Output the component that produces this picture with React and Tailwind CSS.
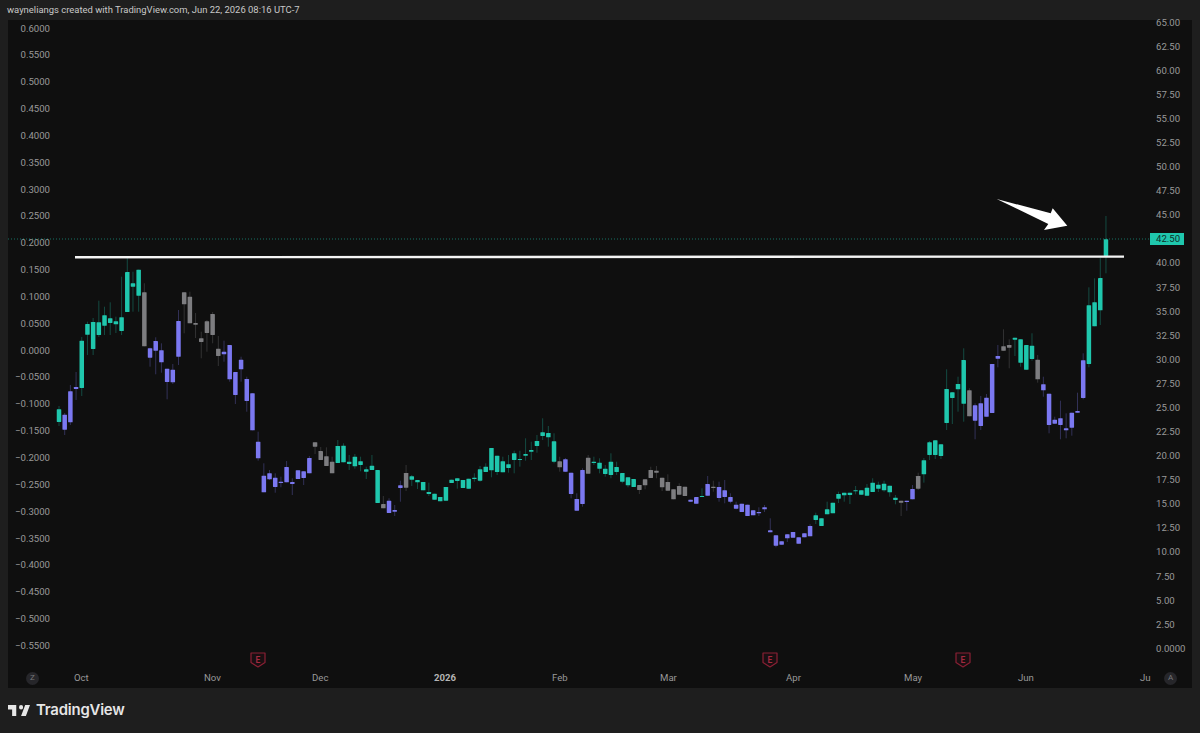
import React from 'react';

const T = '#1fc7ad';
const P = '#7b78f1';
const G = '#7d7d80';

// body top, body bottom, wick top, wick bottom, colour - one row per trading day
const candles = [
  [409.3, 422, 406, 426, T], [414.7, 429.7, 413, 435, P], [391.3, 422.3, 385, 425, P], [387, 389, 372, 400, P],
  [340.7, 388, 337, 396, T], [324, 334.7, 321.7, 355, T], [322, 349, 318, 355, T], [322.3, 335, 300.7, 337, T],
  [315.3, 325.7, 306.7, 335, T], [318.3, 323, 302.3, 335, T], [321.3, 324.3, 316.7, 333, T], [317.3, 331, 276.7, 335, T],
  [272, 312, 258, 312, T], [283.3, 286.7, 271.7, 311.7, T], [269.7, 295.7, 269.7, 311.7, T], [292.3, 346.3, 283.3, 346.3, G],
  [348.3, 357.7, 347.7, 366.7, P], [341, 350.7, 337.3, 374.3, P], [350.3, 362.3, 343.3, 372.7, P], [368.7, 382, 368.7, 399.3, P],
  [369.7, 382.3, 364, 384, P], [321, 356.7, 310, 365, P], [292.3, 304.3, 292.3, 333.3, G], [296.7, 323.3, 291.7, 323.3, G],
  [323, 324.7, 313, 338, G], [338.3, 342, 331.7, 358.3, G], [321.3, 333, 320, 351.7, G], [314, 335, 312, 343.3, G],
  [348.7, 356, 336, 366, G], [351.7, 354.3, 340.7, 361.7, P], [345, 379.3, 345, 381.7, P], [372, 395, 372, 404, P],
  [359.7, 369.3, 356.7, 381.7, P], [379, 401, 376.7, 411.7, P], [393.3, 430.3, 393.3, 430.3, P], [441.7, 458.3, 431.7, 460.7, P],
  [475.7, 492.3, 463.3, 492.3, P], [473.3, 479.3, 470, 480, P], [477.7, 487, 473.3, 492.7, P], [481.7, 483, 476.7, 487.3, P],
  [467, 482.3, 461, 482.3, P], [482, 484, 478.3, 495, P], [470.3, 479, 470.3, 479, P], [471.3, 478, 471.3, 485, P],
  [458, 473.3, 456, 473.3, P], [442.3, 446.7, 442.3, 454, G], [451, 460, 447, 460, G], [456.3, 466, 447.3, 466, G],
  [461.7, 473.3, 456.7, 473.3, G], [446, 463, 440, 463, T], [445.7, 462.3, 443.3, 462.3, T], [461.7, 464, 455, 470, T],
  [456.7, 466.3, 454, 468.7, T], [461.3, 465, 456.7, 471.3, T], [469.3, 471.7, 466.7, 479, T], [465.7, 470, 455, 470, T],
  [470, 503, 470, 503, T], [504, 508.3, 496, 508.3, G], [500.7, 513, 498.3, 513, P], [510, 511.7, 505, 516, P],
  [485.3, 488, 480.7, 501.7, P], [473, 487.7, 465, 491, G], [476.3, 479.7, 475, 486, T], [480, 482.3, 480, 489, T],
  [482, 490.3, 482, 490.3, T], [492, 494, 482.7, 496, T], [493.7, 499.7, 493.7, 499.7, T], [497, 501.3, 497, 501.3, T],
  [487, 500.7, 487, 500.7, T], [479.7, 483, 479.7, 483, T], [478.3, 481, 478.3, 488.7, T], [480, 488, 480, 488, T],
  [478.7, 488.7, 478.7, 488.7, T], [477.7, 479, 473.3, 481.7, T], [469.3, 480.7, 466, 481.7, T], [466.7, 472, 463.3, 472, T],
  [448, 470.3, 448, 477.3, T], [455.7, 472, 455.7, 475, T], [461.3, 472.3, 456.7, 472.3, T], [464.3, 468, 455, 472.7, T],
  [453.3, 460, 450.7, 473.3, T], [459, 460, 450.7, 466.7, T], [454, 455.7, 438.3, 460.7, T], [450, 451.7, 441.7, 460, T],
  [441, 446, 435, 452.7, T], [432.3, 436, 418.3, 440, T], [433, 437.3, 426, 446.7, T], [441.3, 461.7, 433.3, 463.3, T],
  [461.3, 467.3, 456.7, 471.7, G], [459.3, 471.7, 458, 472, P], [472.7, 494, 472.7, 498.3, P], [499, 510.7, 493.3, 510.7, P],
  [470, 504, 468.3, 506.7, P], [457.7, 473.7, 455, 473.7, G], [461.7, 463, 456.7, 465, T], [462.7, 468.7, 458.3, 473.3, T],
  [468.7, 474, 465, 476.7, T], [461.7, 475, 453.3, 478.3, T], [467, 472, 461.7, 475, T], [473, 481.7, 473, 483.3, T],
  [477.3, 485.3, 477.3, 487.3, T], [479, 487, 479, 487, T], [485, 490, 485, 494, G], [479.3, 485.3, 479.3, 489.3, G],
  [470, 478, 466.7, 478, G], [470.7, 472.7, 466, 478.3, G], [477.7, 487.3, 477.7, 491, G], [482, 490.7, 474.3, 490.7, G],
  [489.3, 499.3, 489.3, 499.3, G], [486, 494.7, 483.3, 494.7, G], [486.7, 496, 486.7, 496, G], [499.7, 501.7, 499.7, 501.7, P],
  [497, 503.7, 497, 503.7, P], [496, 497, 488.3, 497, T], [484, 495.7, 476, 495.7, P], [486.7, 488, 480.7, 491.7, G],
  [487, 498, 481.7, 501.7, P], [490.3, 497, 480, 503.3, P], [497, 501.7, 493.3, 503.3, P], [504.7, 508.7, 501.7, 509.3, P],
  [503.7, 512, 503.7, 512, P], [504.7, 516, 504.7, 516, P], [510.3, 515.3, 510.3, 515.3, P], [512, 513.3, 507.3, 516, P],
  [507.3, 509.3, 505, 512, P], [530.3, 532.3, 518.3, 532.3, P], [535.3, 545.7, 535.3, 547.3, P], [541.3, 544.7, 541.3, 544.7, P],
  [534.3, 538.3, 534.3, 542, P], [532, 537.7, 532, 537.7, P], [537.3, 543.7, 537.3, 543.7, P], [533.3, 537.3, 533.3, 537.3, P],
  [526, 536.3, 524.3, 536.3, P], [515.3, 520, 512.7, 524, T], [518.3, 526, 518.3, 526, T], [509.3, 514.3, 501.7, 514.3, T],
  [502.7, 513.3, 502.7, 513.3, T], [494, 498.7, 491.7, 503, T], [492.7, 495.3, 492.7, 501.7, T], [492.7, 495, 492.7, 504, T],
  [490.3, 491.3, 486, 494.3, T], [490.3, 494.7, 490.3, 494.7, T], [487.7, 495.7, 484, 495.7, T], [482.7, 492, 478.3, 492, T],
  [484.7, 488.7, 481.7, 492, T], [483.7, 490.3, 480.7, 491.7, T], [485.7, 492.3, 485.7, 496.7, T], [497.7, 500, 495, 504.3, T],
  [500.7, 502.7, 500.7, 516, G], [500.7, 502, 500.7, 510.7, P], [489, 499.3, 485, 499.3, P], [476, 488.7, 472.7, 490, G],
  [460.3, 474.3, 458, 482.7, T], [442.3, 455, 441, 460, T], [440.3, 455, 440.3, 459, T], [444.3, 456, 444.3, 459, T],
  [389, 423, 369.3, 430, T], [392.3, 398, 392.3, 424, T], [384, 389.3, 376.7, 411.7, T], [360, 403.7, 348.3, 421.7, T],
  [390.3, 416.3, 388.3, 416.3, G], [405.3, 420.7, 403.3, 439.3, P], [403.3, 426, 396, 430, P], [397.7, 416.7, 394, 416.7, P],
  [364, 413, 364, 413, P], [356, 358.7, 345, 367.3, P], [346.3, 350.7, 329.3, 350.7, G], [345, 347.7, 339.3, 368.3, G],
  [337.7, 339.7, 337.7, 356, T], [339.3, 362.7, 339.3, 366.7, T], [345, 369.7, 345, 369.7, T], [345.7, 359, 333.3, 360.7, T],
  [359.7, 379.3, 355, 382.7, G], [384.3, 390.3, 376.7, 396.7, P], [393.7, 425, 393.7, 433.3, P], [419.7, 423.7, 416.7, 423.7, P],
  [418.3, 425, 400.7, 439.3, P], [428.3, 430.3, 413.3, 438.3, P], [412.7, 427.7, 412.7, 435.7, P], [411, 412.7, 392.7, 412.7, P],
  [360.3, 398, 353.3, 399.3, P], [305.3, 364, 287.3, 367.3, T], [302.3, 326.3, 278.3, 326.3, T], [278, 310.3, 258, 325, T],
  [239.3, 256, 216, 273.3, T],
];

const leftLabels = [
  '0.6000', '0.5500', '0.5000', '0.4500', '0.4000', '0.3500', '0.3000', '0.2500', '0.2000', '0.1500', '0.1000', '0.0500',
  '0.0000', '−0.0500', '−0.1000', '−0.1500', '−0.2000', '−0.2500', '−0.3000', '−0.3500', '−0.4000', '−0.4500', '−0.5000', '−0.5500',
];

const rightLabels = [
  '65.00', '62.50', '60.00', '57.50', '55.00', '52.50', '50.00', '47.50', '45.00', '42.50', '40.00', '37.50', '35.00', '32.50',
  '30.00', '27.50', '25.00', '22.50', '20.00', '17.50', '15.00', '12.50', '10.00', '7.50', '5.00', '2.50', '0.0000',
];

const earnings = [258, 770, 963];

const Candle = ({ c, i }) => {
  const x = 59 + 5.69 * i;
  const [top, bottom, wickTop, wickBottom, color] = c;
  return (
    <g>
      <line x1={x} x2={x} y1={wickTop} y2={wickBottom} stroke={color} strokeOpacity="0.36" strokeWidth="0.9" />
      <rect x={x - 2.25} y={top} width="4.5" height={bottom - top} rx="0.4" fill={color} />
    </g>
  );
};

const App = () => {
  return (
    <div className="w-[1200px] h-[733px] overflow-hidden bg-[#1e1e1e] font-['Roboto',sans-serif]">
      <div className="h-[20px] pl-[7px] flex items-center text-[9.45px] text-[#c8c8c8]">
        wayneliangs created with TradingView.com, Jun 22, 2026 08:16 UTC-7
      </div>

      <div className="relative mx-[8px] h-[668px] bg-[#0f0f0f] flex flex-col text-[9.6px] text-[#999999]">
        <div className="h-[648px] flex justify-between">
          <div className="w-[42px] h-[631.5px] mt-[1.5px] flex flex-col justify-between items-end">
            {leftLabels.map((label) => (
              <span key={label} className="h-[14px] leading-[14px]">{label}</span>
            ))}
          </div>
          <div className="w-[44px] h-[640.3px] -mt-[4.3px] pl-[8px] flex flex-col justify-between items-start">
            {rightLabels.map((label) =>
              label === '42.50' ? (
                <span key={label} className="relative z-10 h-[12px] my-[1px] leading-[12px] -ml-[6px] pl-[6px] pr-[4px] bg-[#1fc7ad] text-[#0f2f2a]">{label}</span>
              ) : (
                <span key={label} className="h-[14px] leading-[14px]">{label}</span>
              )
            )}
          </div>
        </div>

        <div className="h-[20px] pl-[18px] flex items-center">
          <span className="w-[13px] h-[13px] mr-[35px] rounded-full bg-[#26262a] text-[8px] text-[#77777a] flex items-center justify-center">Z</span>
          <span className="w-[130px]">Oct</span>
          <span className="w-[108px]">Nov</span>
          <span className="w-[122px]">Dec</span>
          <span className="w-[118px] font-bold text-[#b4b4b4]">2026</span>
          <span className="w-[108px]">Feb</span>
          <span className="w-[126px]">Mar</span>
          <span className="w-[118px]">Apr</span>
          <span className="w-[114px]">May</span>
          <span className="w-[122px]">Jun</span>
          <span className="w-[24px]">Ju</span>
          <span className="w-[13px] h-[13px] rounded-full bg-[#26262a] text-[8px] text-[#77777a] flex items-center justify-center">A</span>
        </div>

        <svg className="absolute inset-0 w-[1184px] h-[668px]" viewBox="8 20 1184 668">
          <line x1="8" x2="1150" y1="239" y2="239" stroke="#1fc7ad" strokeOpacity="0.55" strokeWidth="1" strokeDasharray="1 2" />
          {candles.map((c, i) => (
            <Candle key={i} c={c} i={i} />
          ))}
          <line x1="75" x2="1124" y1="257.2" y2="256.6" stroke="#f4f4f4" strokeWidth="2.4" />
          <polygon points="996.7,199 1050.7,213.3 1052.7,208.3 1067.3,225.7 1044,230 1048.3,224" fill="#ffffff" />
          {earnings.map((x) => (
            <g key={x}>
              <path
                d={`M${x - 7} 653h14v9.5l-7 4.5l-7-4.5z`}
                fill="#1a0f12"
                stroke="#8a2034"
                strokeWidth="1.2"
                strokeLinejoin="round"
              />
              <text x={x} y="662.5" textAnchor="middle" fontSize="8.5" fontWeight="600" fill="#a42a40">E</text>
            </g>
          ))}
        </svg>
      </div>

      <div className="h-[45px] pl-[8px] flex items-center gap-[6px] text-[#e6e6e6] font-['Inter',sans-serif]">
        <svg className="w-[22px] h-[11px]" viewBox="2 6 32 15" preserveAspectRatio="none" fill="currentColor">
          <path d="M14 6H2v6h6v9h6V6zm14 15h-7l6-15h7l-6 15zm-7-9a3 3 0 1 0 0-6 3 3 0 0 0 0 6z" />
        </svg>
        <span className="text-[14.9px] font-semibold tracking-[-0.2px]">TradingView</span>
      </div>
    </div>
  );
};

export default App;
